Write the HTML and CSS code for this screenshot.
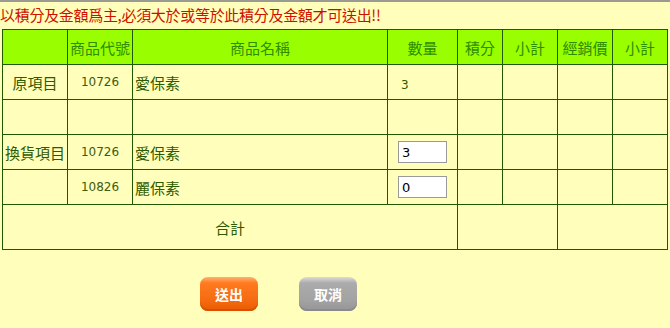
FILE: index.html
```html
<!DOCTYPE html>
<html>
<head>
<meta charset="utf-8">
<link rel="stylesheet" href="styles.css">
</head>
<body>
<div class="page">
  <p class="notice">以積分及金額爲主,必須大於或等於此積分及金額才可送出!!</p>
  <table class="grid">
    <colgroup>
      <col class="c1"><col class="c2"><col class="c3"><col class="c4">
      <col class="c5"><col class="c6"><col class="c7"><col class="c8">
    </colgroup>
    <thead>
      <tr class="head">
        <th></th><th>商品代號</th><th>商品名稱</th><th>數量</th>
        <th>積分</th><th>小計</th><th>經銷價</th><th>小計</th>
      </tr>
    </thead>
    <tbody>
      <tr class="row">
        <td class="label">原項目</td><td class="code">10726</td><td class="name">愛保素</td>
        <td class="qty"><span class="qtytext">3</span></td><td></td><td></td><td></td><td></td>
      </tr>
      <tr class="row">
        <td></td><td></td><td></td><td></td><td></td><td></td><td></td><td></td>
      </tr>
      <tr class="row">
        <td class="label">換貨項目</td><td class="code">10726</td><td class="name">愛保素</td>
        <td class="qty"><input class="box" type="text" value="3"></td><td></td><td></td><td></td><td></td>
      </tr>
      <tr class="row">
        <td></td><td class="code">10826</td><td class="name">麗保素</td>
        <td class="qty"><input class="box" type="text" value="0"></td><td></td><td></td><td></td><td></td>
      </tr>
      <tr class="total">
        <td colspan="4" class="sum">合計</td><td colspan="2"></td><td colspan="2"></td>
      </tr>
    </tbody>
  </table>
  <div class="actions">
    <button class="btn send" type="button">送出</button>
    <button class="btn cancel" type="button">取消</button>
  </div>
</div>
</body>
</html>
```

FILE: styles.css
```css
html, body {
  margin: 0;
  padding: 0;
  background: #ffffbb;
}
body {
  font-family: "Noto Sans CJK TC", "DejaVu Sans", sans-serif;
}
.page {
  border-top: 2px solid #9a9a92;
  height: 326px;
}
.notice {
  margin: 0;
  padding: 3px 0 0 0;
  height: 24px;
  line-height: 20px;
  color: #cc1100;
  font-size: 15px;
  letter-spacing: -0.3px;
}
.grid {
  margin-left: 2px;
  width: 666px;
  table-layout: fixed;
  border-collapse: collapse;
}
.c1 { width: 65px; }
.c2 { width: 65px; }
.c3 { width: 255px; }
.c4 { width: 70px; }
.c5 { width: 45px; }
.c6 { width: 55px; }
.c7 { width: 55px; }
.c8 { width: 55px; }
.grid th, .grid td {
  border: 1px solid #1f5a00;
  padding: 0;
}
.head th {
  background: #99ff00;
  color: #2e8c00;
  font-weight: normal;
  font-size: 15px;
  height: 34px;
  text-align: center;
}
.row td {
  height: 34px;
  color: #2f5a00;
  font-size: 15px;
}
.label {
  text-align: center;
}
.row .code {
  text-align: center;
  font-family: "DejaVu Sans", sans-serif;
  font-size: 12px;
  color: #3d5a10;
}
.row .name {
  padding-left: 2px;
}
.row .qty {
  padding-left: 10px;
}
.qtytext {
  font-family: "DejaVu Sans", sans-serif;
  font-size: 12px;
  padding-left: 3px;
}
.box {
  box-sizing: border-box;
  width: 49px;
  height: 22px;
  border: 1px solid #9a9a9a;
  background: #ffffff;
  padding: 0 3px;
  font-family: "DejaVu Sans", sans-serif;
  font-size: 13px;
  color: #000;
  display: block;
}
.total td {
  height: 44px;
  color: #2f5a00;
  font-size: 15px;
}
.sum {
  text-align: center;
}
.actions {
  display: flex;
  gap: 41px;
  padding: 27px 0 0 200px;
}
.btn {
  width: 58px;
  height: 34px;
  border: none;
  border-radius: 8px;
  color: #ffffff;
  font-family: "Noto Sans CJK TC", sans-serif;
  font-size: 14px;
  font-weight: bold;
  padding: 0;
}
.send {
  background: linear-gradient(#ffb070 0%, #ff7a20 18%, #f56a10 70%, #e85a00 100%);
  box-shadow: inset 0 -2px 0 #d85000;
}
.cancel {
  background: linear-gradient(#dcdcdc 0%, #ababab 18%, #a2a2a2 70%, #959595 100%);
  box-shadow: inset 0 -2px 0 #8a8a8a;
}
```
